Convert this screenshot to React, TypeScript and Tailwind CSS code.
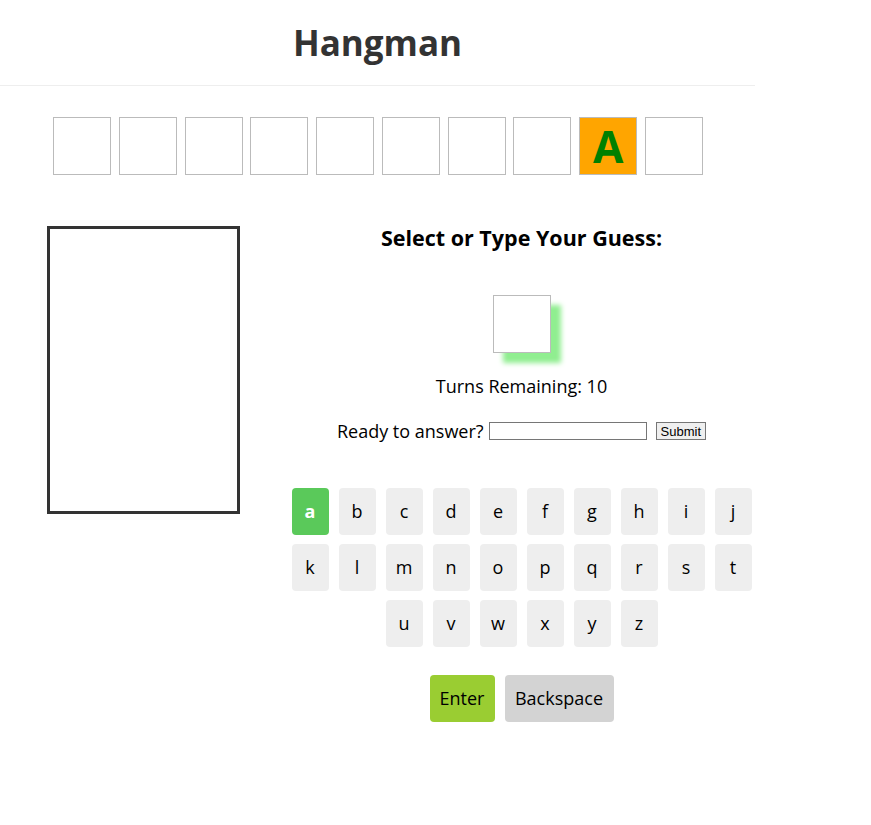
const word = ['', '', '', '', '', '', '', '', 'A', ''];
const rows = [
  ['a', 'b', 'c', 'd', 'e', 'f', 'g', 'h', 'i', 'j'],
  ['k', 'l', 'm', 'n', 'o', 'p', 'q', 'r', 's', 't'],
  ['u', 'v', 'w', 'x', 'y', 'z'],
];
const guessed = ['a'];

export default function App() {
  return (
    <div className="w-[755px] bg-white font-['Open_Sans','Noto_Sans',sans-serif] text-black">
      <header className="h-[86px] border-b border-[#eee] flex items-center justify-center">
        <h1 className="text-[35px] font-bold text-[#333] leading-none">Hangman</h1>
      </header>

      <div className="flex justify-center gap-[7.8px] mt-[31px] pl-[1px]">
        {word.map((l, i) => (
          <div
            key={i}
            className={
              'w-[58px] h-[58px] border border-[#bbb] flex items-center justify-center text-[44px] font-bold text-[#008000] leading-none ' +
              (l ? 'bg-[#ffa500]' : 'bg-white')
            }
          >
            {l}
          </div>
        ))}
      </div>

      <div className="flex mt-[51px]">
        <div className="ml-[47px] w-[193px] h-[288px] border-[3px] border-[#333] shrink-0" />

        <div className="flex-1 ml-[48px] flex flex-col items-center">
          <h3 className="text-[21.5px] font-bold leading-[24px]">Select or Type Your Guess:</h3>

          <div className="mt-[45px] w-[58px] h-[58px] border border-[#bbb] bg-white shadow-[10px_10px_5px_#90ee90]" />

          <p className="mt-[22px] text-[18px] leading-[22px]">Turns Remaining: 10</p>

          <div className="mt-[23px] flex items-center text-[18px] leading-[22px]">
            <span>Ready to answer?</span>
            <input
              type="text"
              className="ml-[5px] w-[158px] h-[18px] border border-[#767676] bg-white outline-none"
            />
            <button className="ml-[9px] h-[18px] px-[4px] border border-[#767676] bg-[#efefef] text-[13px] leading-none font-['Liberation_Sans',Arial,sans-serif]">
              Submit
            </button>
          </div>

          <div className="mt-[46px] flex flex-col items-center gap-[9px]">
            {rows.map((row, r) => (
              <div key={r} className="flex gap-[10px]">
                {row.map((k) => (
                  <button
                    key={k}
                    className={
                      'w-[37px] h-[47px] rounded-[4px] text-[18px] flex items-center justify-center ' +
                      (guessed.includes(k) ? 'bg-[#5ac95a] text-white font-bold' : 'bg-[#eee] text-black')
                    }
                  >
                    {k}
                  </button>
                ))}
              </div>
            ))}
          </div>

          <div className="mt-[28px] flex gap-[10px]">
            <button className="w-[65px] h-[47px] rounded-[4px] bg-[#9acd32] text-[18px]">Enter</button>
            <button className="w-[109px] h-[47px] rounded-[4px] bg-[#d3d3d3] text-[18px]">Backspace</button>
          </div>
        </div>
      </div>
    </div>
  );
}
